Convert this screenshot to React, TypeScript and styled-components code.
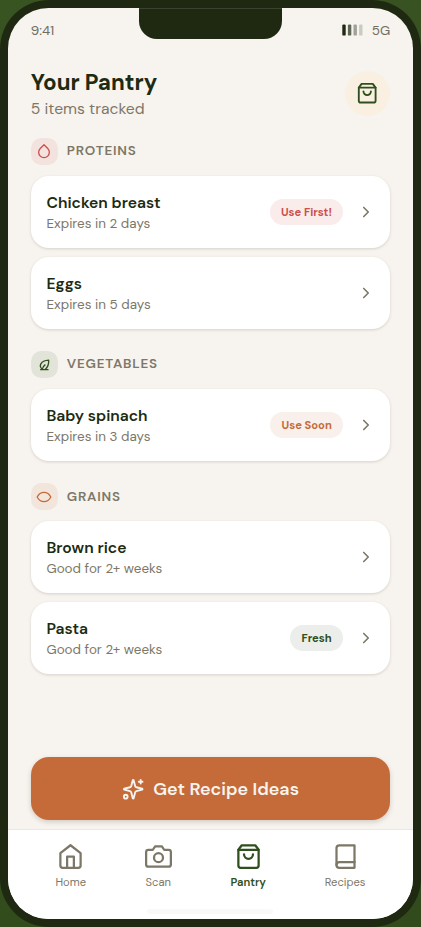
import React from "react";
import styled, { createGlobalStyle } from "styled-components";

const Global = createGlobalStyle`
  * { box-sizing: border-box; }
  body {
    margin: 0;
    background: linear-gradient(160deg, #385421, #314b1c);
    font-family: "DM Sans", Inter, "Open Sans", sans-serif;
    color: #1c2b11;
  }
  button { border: 0; padding: 0; background: none; font-family: inherit; }
`;

const c = {
  ink: "#1f2912",
  muted: "#7d7767",
  cream: "#f7f3ee",
  green: "#2f4f1d",
  red: "#cd504d",
  orange: "#c56b39",
};

const Phone = styled.main`
  width: 421px;
  height: 927px;
  padding: 8.4px 8.5px 8.4px 8.4px;
  border-radius: 49px;
  background: ${c.ink};
`;

const Screen = styled.div`
  position: relative;
  display: flex;
  flex-direction: column;
  height: 100%;
  border-radius: 40.5px;
  overflow: hidden;
  background: ${c.cream};
`;

const Notch = styled.div`
  position: absolute;
  top: 0;
  left: 50%;
  width: 143.6px;
  height: 31px;
  margin-left: -71.6px;
  border-radius: 0 0 18px 18px;
  background: ${c.ink};
  border-top: 0.5px solid #3a4230;
`;

const StatusBar = styled.div`
  display: flex;
  justify-content: space-between;
  align-items: center;
  height: 44px;
  padding: 0 22.4px;
  font-size: 13.44px;
  color: #706d61;
`;

const Label = styled.span<{ $track?: number }>`
  letter-spacing: ${(p) => p.$track ?? 0}px;
  white-space: nowrap;
`;

const Signal = styled.div`
  display: flex;
  align-items: center;
  gap: 9px;
`;

const SignalBars = () => (
  <svg width="21" height="12" viewBox="0 0 21 12" fill={c.ink}>
    {[1, 0.7, 0.4, 0.2].map((alpha, i) => (
      <rect key={alpha} x={0.3 + i * 5.6} y="0.4" width="3.4" height="11.2" rx="1.2" opacity={alpha} />
    ))}
  </svg>
);

const Header = styled.header`
  display: flex;
  justify-content: space-between;
  height: 85.5px;
  padding: 16px 22.4px 0;
`;

const Title = styled.h1`
  margin: 0;
  padding-top: 1px;
  font-size: 22.4px;
  line-height: 28px;
  font-weight: 700;
`;

const Subtitle = styled.p`
  margin: 0;
  font-size: 15.68px;
  line-height: 23px;
  color: ${c.muted};
`;

const RoundButton = styled.button`
  display: grid;
  place-items: center;
  width: 45px;
  height: 45px;
  margin-top: 2.5px;
  border-radius: 50%;
  background: #f9f0e2;
  color: ${c.green};
`;

const Sections = styled.div`
  display: flex;
  flex-direction: column;
  gap: 22.2px;
  flex: 1;
  padding: 0 22.4px;
`;

const Section = styled.section`
  display: flex;
  flex-direction: column;
  gap: 9px;
`;

const SectionHead = styled.div`
  display: flex;
  align-items: center;
  gap: 9px;
  height: 27px;
  margin-bottom: 2.2px;
`;

const Chip = styled.div<{ $bg: string; $fg: string }>`
  display: grid;
  place-items: center;
  width: 27px;
  height: 27px;
  border-radius: 10.5px;
  background: ${(p) => p.$bg};
  color: ${(p) => p.$fg};
`;

const SectionTitle = styled.h2`
  margin: 0;
  font-size: 13.44px;
  line-height: 20px;
  font-weight: 600;
  color: ${c.muted};
`;

const Card = styled.article`
  display: flex;
  align-items: center;
  height: 71.8px;
  padding: 0 15.4px 0 15.7px;
  border-radius: 18px;
  background: #fff;
  box-shadow: 0 1px 3px rgba(60, 45, 30, 0.17);
`;

const ItemText = styled.div`
  flex: 1;
  padding-top: 2px;
`;

const ItemName = styled.h3`
  margin: 0;
  font-size: 15.68px;
  line-height: 22px;
  font-weight: 600;
`;

const ItemNote = styled.p`
  margin: 0;
  font-size: 13.44px;
  line-height: 20px;
  color: ${c.muted};
`;

const Badge = styled.span<{ $bg: string; $fg: string; $width: number }>`
  display: flex;
  align-items: center;
  justify-content: center;
  width: ${(p) => p.$width}px;
  height: 26px;
  margin-right: 13.5px;
  border-radius: 13px;
  background: ${(p) => p.$bg};
  color: ${(p) => p.$fg};
  font-size: 11.2px;
  font-weight: 700;
`;

const Primary = styled.button`
  display: flex;
  align-items: center;
  justify-content: center;
  gap: 9px;
  height: 63px;
  margin: 0 22.4px 8.2px;
  border-radius: 18px;
  background: ${c.orange};
  color: ${c.cream};
  font-size: 17.92px;
  font-weight: 600;
  box-shadow: 0 2px 5px rgba(60, 45, 30, 0.2);
`;

const Nav = styled.nav`
  display: flex;
  justify-content: center;
  gap: 58.8px;
  height: 90px;
  padding-top: 13.8px;
  border-top: 1.5px solid #ece7e1;
  background: #fff;
`;

const NavItem = styled.a<{ $active?: boolean }>`
  display: flex;
  flex-direction: column;
  align-items: center;
  gap: 3px;
  font-size: 11.2px;
  line-height: 18px;
  font-weight: ${(p) => (p.$active ? 600 : 400)};
  color: ${(p) => (p.$active ? c.green : c.muted)};
`;

const HomeIndicator = styled.div`
  position: absolute;
  bottom: 4.5px;
  left: 139px;
  width: 126px;
  height: 5px;
  border-radius: 3px;
  background: #faf9f8;
`;

const Icon = ({ size, stroke = 2, children }: { size: number; stroke?: number; children: React.ReactNode }) => (
  <svg width={size} height={size} viewBox="0 0 24 24" fill="none" stroke="currentColor" strokeWidth={stroke} strokeLinecap="round" strokeLinejoin="round">
    {children}
  </svg>
);

const bag = (
  <>
    <path d="M6 2 3 6v14a2 2 0 0 0 2 2h14a2 2 0 0 0 2-2V6l-3-4z" />
    <path d="M3 6h18" />
    <path d="M16 10a4 4 0 0 1-8 0" />
  </>
);
const home = (
  <>
    <path d="M3 9l9-7 9 7v11a2 2 0 0 1-2 2H5a2 2 0 0 1-2-2z" />
    <path d="M9 22V12h6v10" />
  </>
);
const camera = (
  <>
    <path d="M23 19a2 2 0 0 1-2 2H3a2 2 0 0 1-2-2V8a2 2 0 0 1 2-2h4l2-3h6l2 3h4a2 2 0 0 1 2 2z" />
    <circle cx="12" cy="13" r="4" />
  </>
);
const book = (
  <>
    <path d="M4 19.5A2.5 2.5 0 0 1 6.5 17H20" />
    <path d="M6.5 2H20v20H6.5A2.5 2.5 0 0 1 4 19.5v-15A2.5 2.5 0 0 1 6.5 2z" />
  </>
);
const drop = <path d="M12 2.69l5.66 5.66a8 8 0 1 1-11.31 0z" />;
const leaf = (
  <>
    <path d="M9.500 19.800C4 16 6 7 19 6.300 19.300 12 18 16.500 14 19.800" />
    <path d="M7 20.500h11M9.500 19.800c.3-2.500 1.500-4.500 4-6.500" />
  </>
);
const grain = <path d="M1.800 12C4.200 7.200 7.600 5 12 5s7.800 2.200 10.200 7C19.800 16.800 16.400 19 12 19S4.200 16.800 1.800 12z" />;
const sparkles = (
  <>
    <path d="M9.937 15.500A2 2 0 0 0 8.500 14.063l-6.135-1.582a.5.5 0 0 1 0-.962L8.500 9.936A2 2 0 0 0 9.937 8.500l1.582-6.135a.5.5 0 0 1 .963 0L14.063 8.500A2 2 0 0 0 15.500 9.937l6.135 1.581a.5.5 0 0 1 0 .964L15.500 14.063a2 2 0 0 0-1.437 1.437l-1.582 6.135a.5.5 0 0 1-.963 0z" />
    <path d="M20 2v4M22 4h-4" />
    <circle cx="4" cy="20" r="2" />
  </>
);

type Tone = "first" | "soon" | "fresh";
const tones: Record<Tone, { text: string; bg: string; fg: string; width: number }> = {
  first: { text: "Use First!", bg: "#f9eceb", fg: c.red, width: 73.6 },
  soon: { text: "Use Soon", bg: "#f9efeb", fg: c.orange, width: 73 },
  fresh: { text: "Fresh", bg: "#ebeeea", fg: c.green, width: 53.3 },
};

type Item = { name: string; note: string; tone?: Tone };
type Group = { title: string; bg: string; fg: string; icon: React.ReactNode; items: Item[] };

const sections: Group[] = [
  {
    title: "PROTEINS", bg: "#f2e3df", fg: c.red, icon: drop,
    items: [
      { name: "Chicken breast", note: "Expires in 2 days", tone: "first" },
      { name: "Eggs", note: "Expires in 5 days" },
    ],
  },
  {
    title: "VEGETABLES", bg: "#e2e3d9", fg: c.green, icon: leaf,
    items: [{ name: "Baby spinach", note: "Expires in 3 days", tone: "soon" }],
  },
  {
    title: "GRAINS", bg: "#f2e5dc", fg: c.orange, icon: grain,
    items: [
      { name: "Brown rice", note: "Good for 2+ weeks" },
      { name: "Pasta", note: "Good for 2+ weeks", tone: "fresh" },
    ],
  },
];

const tabs = [
  { name: "Home", icon: home },
  { name: "Scan", icon: camera },
  { name: "Pantry", icon: bag, active: true },
  { name: "Recipes", icon: book },
];

const ChevronBox = styled.span`
  display: flex;
  color: ${c.muted};
`;

function Chevron() {
  return (
    <ChevronBox>
      <Icon size={18} stroke={2.2}><path d="m9 18 6-6-6-6" /></Icon>
    </ChevronBox>
  );
}

export default function App() {
  return (
    <>
      <Global />
      <Phone>
        <Screen>
          <StatusBar>
            <Label>9:41</Label>
            <Signal>
              <SignalBars />
              <Label>5G</Label>
            </Signal>
          </StatusBar>
          <Header>
            <div>
              <Title>Your Pantry</Title>
              <Subtitle>5 items tracked</Subtitle>
            </div>
            <RoundButton aria-label="Pantry bag"><Icon size={22.4}>{bag}</Icon></RoundButton>
          </Header>
          <Sections>
            {sections.map((s) => (
              <Section key={s.title}>
                <SectionHead>
                  <Chip $bg={s.bg} $fg={s.fg}><Icon size={16}>{s.icon}</Icon></Chip>
                  <SectionTitle><Label $track={0.8}>{s.title}</Label></SectionTitle>
                </SectionHead>
                {s.items.map((item) => {
                  const tone = item.tone && tones[item.tone];
                  return (
                    <Card key={item.name}>
                      <ItemText>
                        <ItemName>{item.name}</ItemName>
                        <ItemNote>{item.note}</ItemNote>
                      </ItemText>
                      {tone && (
                        <Badge $bg={tone.bg} $fg={tone.fg} $width={tone.width}>
                          <Label>{tone.text}</Label>
                        </Badge>
                      )}
                      <Chevron />
                    </Card>
                  );
                })}
              </Section>
            ))}
          </Sections>
          <Primary>
            <Icon size={22.4}>{sparkles}</Icon>
            <Label>Get Recipe Ideas</Label>
          </Primary>
          <Nav>
            {tabs.map((t) => (
              <NavItem key={t.name} $active={t.active}>
                <Icon size={27}>{t.icon}</Icon>
                <Label>{t.name}</Label>
              </NavItem>
            ))}
          </Nav>
          <Notch />
          <HomeIndicator />
        </Screen>
      </Phone>
    </>
  );
}
